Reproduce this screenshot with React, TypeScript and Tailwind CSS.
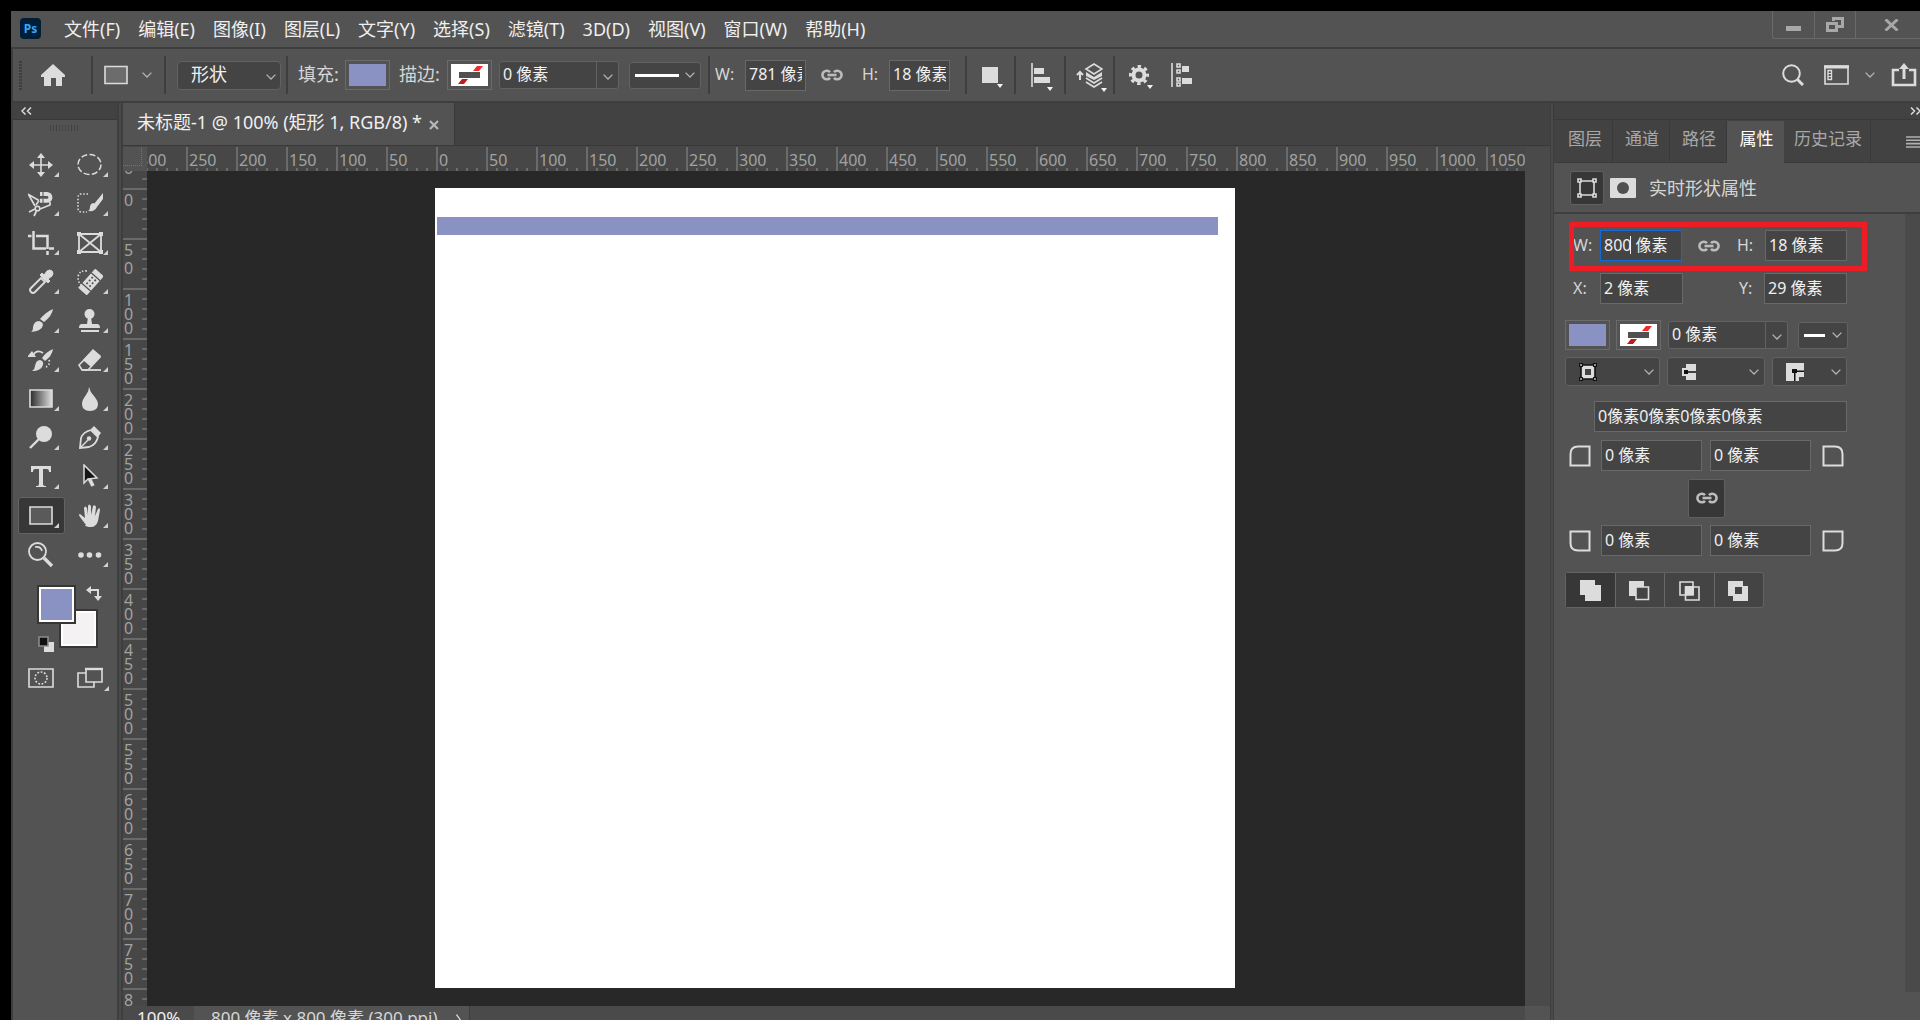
import type { ReactNode } from 'react'

const LIGHT = '#dcdcdc'

const menus = [
  '文件(F)',
  '编辑(E)',
  '图像(I)',
  '图层(L)',
  '文字(Y)',
  '选择(S)',
  '滤镜(T)',
  '3D(D)',
  '视图(V)',
  '窗口(W)',
  '帮助(H)',
]

const horizontalMarks = Array.from({ length: 28 }, (_, i) => Math.abs(i * 50 - 300))
const verticalMarks = Array.from({ length: 18 }, (_, i) => Math.abs(i * 50 - 50))

interface IconProps {
  w?: number
  h?: number
  children: ReactNode
}

function Icon({ w = 26, h = 26, children }: IconProps) {
  return (
    <svg
      width={w}
      height={h}
      viewBox={`0 0 ${w} ${h}`}
      fill="none"
      stroke={LIGHT}
      strokeWidth={1.6}
      className="block shrink-0"
      aria-hidden="true"
    >
      {children}
    </svg>
  )
}

function Chevron() {
  return (
    <svg width="10" height="6" viewBox="0 0 10 6" className="block shrink-0" aria-hidden="true">
      <path d="M.6.6 5 5 9.4.6" fill="none" stroke="#b4b4b4" strokeWidth="1.3" />
    </svg>
  )
}

function LinkIcon() {
  return (
    <Icon w={22} h={12}>
      <g stroke="#bcbcbc" strokeWidth={2.6}>
        <path d="M9 3.2A4.3 4.3 0 1 0 9 8.800" />
        <path d="M13 3.2a4.3 4.3 0 1 1 0 5.600" />
        <path d="M6.5 6h9" />
      </g>
    </Icon>
  )
}

function Divider() {
  return <span className="h-[38px] w-[2px] shrink-0 bg-[#3e3e3e]" />
}

function FillSwatch() {
  return (
    <button type="button" aria-label="填充" className="h-[30px] w-[45px] shrink-0 border border-[#6a6a6a] p-[3px]">
      <span className="block h-full w-full bg-[#8a92c4]" />
    </button>
  )
}

function StrokeSwatch() {
  return (
    <button type="button" aria-label="描边" className="h-[30px] w-[45px] shrink-0 border border-[#6a6a6a] p-[3px]">
      <svg width="37" height="22" viewBox="0 0 37 22" className="block" aria-hidden="true">
        <path d="M0 0h37v22H0z" fill="#fff" />
        <path d="M7 20 11 15h6l-4 5z" fill="#c01c1c" />
        <path d="M22 7 26 2h6l-4 5z" fill="#ee2a2a" />
        <path d="M8 8h21v6H8z" fill="#505050" />
      </svg>
    </button>
  )
}

interface FieldProps {
  label: string
  value: string
  className: string
  active?: boolean
}

function Field({ label, value, className, active }: FieldProps) {
  return (
    <input
      type="text"
      aria-label={label}
      defaultValue={value}
      className={`h-[31px] shrink-0 border bg-[#444] px-[3px] pb-1 text-base text-[#f0f0f0] outline-none ${
        active ? 'border-[#1469d8]' : 'border-[#686868]'
      } ${className}`}
    />
  )
}

function StrokeWidthCombo() {
  return (
    <div className="flex h-[28px] w-[120px] shrink-0 rounded-[3px] border border-[#626262] bg-[#444]">
      <input
        type="text"
        aria-label="描边宽度"
        defaultValue="0 像素"
        className="w-[96px] bg-transparent px-[3px] pb-[2px] text-base text-[#f0f0f0] outline-none"
      />
      <button
        type="button"
        aria-label="描边宽度选项"
        className="flex flex-1 items-center justify-center border-l border-[#626262] pt-1"
      >
        <Chevron />
      </button>
    </div>
  )
}

function MenuButton({ label, className, children }: { label: string; className: string; children: ReactNode }) {
  return (
    <button
      type="button"
      aria-label={label}
      aria-haspopup="listbox"
      className={`flex shrink-0 items-center justify-between rounded-[3px] border border-[#626262] bg-[#444] pr-[5px] ${className}`}
    >
      {children}
      <Chevron />
    </button>
  )
}

function DropMark() {
  return (
    <svg width="6" height="4" viewBox="0 0 6 4" className="absolute -right-1 -bottom-1" aria-hidden="true">
      <path d="M0 0h6L3 4z" fill="#f4f4f4" />
    </svg>
  )
}

const tools: { name: string; icon: ReactNode; plain?: boolean }[] = [
  {
    name: '移动工具',
    icon: (
      <>
        <path d="M13 4v18M4 13h18" />
        <path d="m13 1 4 5H9zM13 25l4-5H9zM1 13l5-4v8zM25 13l-5-4v8z" fill={LIGHT} stroke="none" />
      </>
    ),
  },
  { name: '椭圆选框工具', icon: <ellipse cx="12.5" cy="12.5" rx="11.5" ry="10" strokeDasharray="6 2.4" strokeWidth="1.5" /> },
  {
    name: '磁性套索工具',
    icon: (
      <>
        <path d="M7 15 .5 3.500 11 9.500M7 18l-6 3M8.500 20 6 25M12 18l10-4v-3M11 9.500 8 14" strokeWidth="1.7" />
        <circle cx="9.500" cy="17.500" r="2.300" />
        <path d="M12 3h7a3.200 3.200 0 0 1 0 6.800h-7" strokeWidth="4" />
        <path d="M15 0v5M15 8v5" stroke="#535353" strokeWidth="1" />
      </>
    ),
  },
  {
    name: '快速选择工具',
    icon: (
      <>
        <path d="M11 3H4Q1 3 1 7v10q0 4 4 4h5" strokeDasharray="1.5 1.8" />
        <path d="M26 2v6l-6 8-3-3z" fill={LIGHT} stroke="none" />
        <path d="M16 12q4 1 4 4-2 5-9 4 2-1 2-4 0-3 3-4z" fill={LIGHT} stroke="none" />
      </>
    ),
  },
  {
    name: '裁剪工具',
    icon: (
      <g strokeWidth="2.5">
        <path d="M5.500 1v17.500H18M0 6h3.500M8 6h11.500v13M19.500 21v4M21 18.500h5" />
      </g>
    ),
  },
  {
    name: '图框工具',
    icon: (
      <>
        <path d="M2 4h22v18H2zM2 4l22 18M24 4 2 22" strokeWidth="1.8" />
        <path d="M0 2h4v4H0zM22 2h4v4h-4zM0 20h4v4H0zM22 20h4v4h-4z" fill={LIGHT} stroke="none" />
      </>
    ),
  },
  {
    name: '吸管工具',
    icon: (
      <>
        <path d="m13 9 4 4L7 23q-2 2-4 0t0-4z" strokeWidth="1.9" />
        <path d="m12 6 2-2 2 2 3-4q3-2 5 0t0 5l-4 3 2 2-2 2z" fill={LIGHT} stroke={LIGHT} strokeWidth="1" />
      </>
    ),
  },
  {
    name: '污点修复画笔工具',
    icon: (
      <>
        <path d="M10 2Q2 1 1 8q0 5 3 8" strokeDasharray="1.5 1.8" />
        <g transform="rotate(-48 14 13)">
          <path d="M2 8h24v10H2z" fill={LIGHT} stroke={LIGHT} />
          <path d="M7 7v12M21 7v12" stroke="#535353" strokeWidth="1.2" />
          <path d="M9.500 11h10M9.500 15h10" stroke="#535353" strokeWidth="1.8" strokeDasharray="1.8 2" />
        </g>
      </>
    ),
  },
  {
    name: '画笔工具',
    icon: (
      <>
        <path d="M25 1q-1 7-9 13l-4-3Q18 4 25 1z" fill={LIGHT} stroke="none" />
        <path d="M11 13q4 1 4 4-1 6-12 7 2-1 2-5 1-6 6-6z" fill={LIGHT} stroke="none" />
      </>
    ),
  },
  {
    name: '仿制图章工具',
    icon: (
      <g fill={LIGHT} stroke="none">
        <circle cx="12.500" cy="6" r="5" />
        <path d="M11 9h3l1 7h5q3 0 3 4H2q0-4 3-4h5zM4 22h18v2H4z" />
      </g>
    ),
  },
  {
    name: '历史记录画笔工具',
    icon: (
      <>
        <path d="M25 2q-1 7-8 12l-3-3Q18 5 25 2zM12 13q4 1 3 5-2 6-11 6 3-2 3-5 1-6 5-6z" fill={LIGHT} stroke="none" />
        <path d="M15 6Q9 2 5 8" strokeWidth="1.7" />
        <path d="m4 4 4 6H-1z" fill={LIGHT} stroke="none" />
        <path d="M21 13q2 5-5 8" strokeDasharray="1.500 2" strokeWidth="1.8" />
      </>
    ),
  },
  {
    name: '橡皮擦工具',
    icon: (
      <>
        <path d="M16 4 23 10 11 23H5l-3-5z" />
        <path d="m16 3 7 6-9 10-7-6z" fill={LIGHT} stroke={LIGHT} />
        <path d="M5 23h19" strokeWidth="1.8" />
      </>
    ),
  },
  {
    name: '渐变工具',
    icon: (
      <>
        <defs>
          <linearGradient id="tool-gradient">
            <stop offset="0" stopColor="#2a2a2a" />
            <stop offset="1" stopColor="#dedede" />
          </linearGradient>
        </defs>
        <path d="M2 4h22v17H2z" fill="url(#tool-gradient)" />
      </>
    ),
  },
  { name: '模糊工具', icon: <path d="M12 1q1 5 5 9 4 5 4 8 0 7-8 7t-8-7q0-4 4-9 3-4 3-8z" fill={LIGHT} stroke="none" /> },
  {
    name: '减淡工具',
    icon: (
      <>
        <circle cx="16" cy="9" r="8" fill={LIGHT} stroke="none" />
        <path d="M11 14 2 23" strokeWidth="2.4" />
      </>
    ),
  },
  {
    name: '钢笔工具',
    icon: (
      <>
        <path d="M14 5q-8 2-10 8L3 23l9-1q7-2 9-10z" strokeWidth="1.800" />
        <path d="M3 23l8-8" strokeWidth="1.400" />
        <circle cx="12" cy="13.500" r="2.200" fill={LIGHT} stroke="none" />
        <path d="m14 4 3-3 7 7-3 4z" fill={LIGHT} stroke="none" />
      </>
    ),
  },
  {
    name: '横排文字工具',
    icon: (
      <path
        d="M3 2h20v6h-2q0-3-2-3h-4v15q0 2 3 2v1H8v-1q3 0 3-2V5H7Q5 5 5 8H3z"
        fill={LIGHT}
        stroke="none"
      />
    ),
  },
  {
    name: '路径选择工具',
    icon: (
      <>
        <path d="m12 14 4 8" strokeWidth="3.600" />
        <path d="M7 1v18l4-4 9-1z" fill="#151515" strokeWidth="1.500" />
      </>
    ),
  },
  { name: '矩形工具', icon: <path d="M2 4h22v17H2z" fill="#5a5a5a" /> },
  {
    name: '抓手工具',
    icon: (
      <path
        d="M9 22 3 14q-2-3 0-3l5 4L7 5q1-3 3 0l1 7V3q1-3 3 0v9l2-9q2-2 3 1l-1 9 3-7q2-2 2 1l-2 11q-2 6-7 6t-6-2z"
        fill={LIGHT}
        stroke="none"
      />
    ),
  },
  {
    name: '缩放工具',
    plain: true,
    icon: (
      <>
        <circle cx="9.500" cy="9.500" r="8.500" strokeWidth="1.800" />
        <path d="m16 16 8 8" strokeWidth="3.400" />
        <path d="M7 5q6-1 7 4" strokeWidth="1.600" />
      </>
    ),
  },
  {
    name: '编辑工具栏',
    icon: (
      <g fill={LIGHT} stroke="none">
        <circle cx="4" cy="13" r="2.800" />
        <circle cx="12.500" cy="13" r="2.800" />
        <circle cx="21.500" cy="13" r="2.800" />
      </g>
    ),
  },
]

function CornerMark() {
  return (
    <svg width="5" height="5" viewBox="0 0 5 5" className="absolute right-[5px] bottom-[5px]" aria-hidden="true">
      <path d="M5 0v5H0z" fill="#d0d0d0" />
    </svg>
  )
}

function MenuBar() {
  return (
    <header className="flex h-[36px] shrink-0 items-start bg-[#535353]">
      <div className="mt-[7px] ml-[9px] flex h-[21px] w-[21px] items-center justify-center rounded-[4px] bg-[#001e36] text-[12px] leading-none font-bold text-[#31a8ff]">
        Ps
      </div>
      <nav className="ml-[23px] flex h-[35px] items-center gap-[18px] text-[18px] leading-6 text-[#efefef]">
        {menus.map((menu) => (
          <button key={menu} type="button" className="whitespace-nowrap">
            {menu}
          </button>
        ))}
      </nav>
      <div className="ml-auto flex h-[28px] rounded-bl-[3px] border-b border-l border-[#6a6a6a]">
        <button type="button" aria-label="最小化" className="flex w-[42px] items-center justify-center border-r border-[#6a6a6a]">
          <span className="mt-2 h-[5px] w-[15px] bg-[#a8a8a8]" />
        </button>
        <button type="button" aria-label="还原" className="flex w-[41px] items-center justify-center border-r border-[#6a6a6a]">
          <Icon w={18} h={16}>
            <g stroke="#a8a8a8" strokeWidth={3}>
              <path d="M1.500 6.500h9v7h-9z" />
              <path d="M7.500 4V1.500h9v8H12" />
            </g>
          </Icon>
        </button>
        <button type="button" aria-label="关闭" className="flex w-[64px] items-center pl-[28px]">
          <Icon w={16} h={12}>
            <path d="m1.500.5 12 11m0-11-12 11" stroke="#a8a8a8" strokeWidth={3} />
          </Icon>
        </button>
      </div>
    </header>
  )
}

function OptionsBar() {
  return (
    <div className="flex h-[56px] shrink-0 items-center border-y-2 border-l-2 border-[#3e3e3e] bg-[#535353] text-[18px] text-[#d6d6d6]">
      <span className="ml-[6px] h-[29px] w-[3px] shrink-0 bg-[repeating-linear-gradient(#3e3e3e_0_2px,transparent_2px_3px)]" />
      <button type="button" aria-label="主页" className="ml-[19px]">
        <Icon w={24} h={22}>
          <path d="M12 0 24 11v2h-3v9h-6v-8h-5v8H3v-9H0v-2z" fill={LIGHT} stroke="none" />
        </Icon>
      </button>
      <div className="ml-[26px] flex">
        <Divider />
      </div>
      <button type="button" aria-label="矩形工具" className="ml-[11px] flex items-center gap-[14px]">
        <Icon w={24} h={20}>
          <path d="M1 1.500h22v17H1z" fill="#6c6c6c" />
        </Icon>
        <Chevron />
      </button>
      <div className="ml-[12px] flex">
        <Divider />
      </div>
      <div className="relative ml-[11px] shrink-0">
        <select
          aria-label="工具模式"
          className="block h-[29px] w-[104px] appearance-none rounded-[4px] border border-[#626262] bg-[#444] pb-[2px] pl-[13px] text-[18px] leading-none text-[#f0f0f0]"
        >
          <option>形状</option>
          <option>路径</option>
          <option>像素</option>
        </select>
        <span className="pointer-events-none absolute top-[13px] right-[5px]">
          <Chevron />
        </span>
      </div>
      <div className="ml-[5px] flex">
        <Divider />
      </div>
      <span className="ml-[10px] w-[47px] shrink-0 pb-[2px]">填充:</span>
      <FillSwatch />
      <span className="ml-[9px] w-[48px] shrink-0 pb-[2px]">描边:</span>
      <StrokeSwatch />
      <div className="ml-[7px]">
        <StrokeWidthCombo />
      </div>
      <div className="ml-[10px]">
        <MenuButton label="描边类型" className="h-[27px] w-[72px] pl-[5px]">
          <span className="h-[3px] w-[44px] bg-white" />
        </MenuButton>
      </div>
      <div className="ml-[7px] flex">
        <Divider />
      </div>
      <span className="ml-[5px] w-[30px] shrink-0 pb-[2px] text-base">W:</span>
      <Field label="宽度" value="781 像素" className="w-[61px]" />
      <button type="button" aria-label="链接形状的宽度和高度" className="ml-[15px]">
        <LinkIcon />
      </button>
      <span className="ml-[19px] w-[27px] shrink-0 pb-[2px] text-base">H:</span>
      <Field label="高度" value="18 像素" className="w-[61px]" />
      <div className="ml-[15px] flex items-center gap-[15px]">
        <Divider />
        <button type="button" aria-label="路径操作" className="relative w-[17px]">
          <Icon w={17} h={17}>
            <path d="M0 0h16v16H0z" fill={LIGHT} stroke="none" />
          </Icon>
          <DropMark />
        </button>
        <Divider />
        <button type="button" aria-label="路径对齐方式" className="relative w-[18px]">
          <Icon w={19} h={24}>
            <path d="M1 0v24" />
            <path d="M3 5h10v6H3zM3 14h16v6H3z" fill={LIGHT} stroke="none" />
          </Icon>
          <DropMark />
        </button>
        <Divider />
      </div>
      <button type="button" aria-label="路径排列方式" className="relative ml-[10px] w-[27px]">
        <Icon w={27} h={26}>
          <path d="M4 10v8M1 13l3-3 3 3" strokeWidth={2} />
          <path d="m18 2 8 5-8 5-8-5z" />
          <path d="m10 10 8 5 8-5v4l-8 4-8-4z" fill={LIGHT} stroke="none" />
          <path d="m10 16 8 5 8-5M10 20l8 5 8-5" />
        </Icon>
        <DropMark />
      </button>
      <div className="ml-[10px] flex">
        <Divider />
      </div>
      <button type="button" aria-label="其他形状和路径选项" className="relative ml-[14px] w-[20px]">
        <Icon w={20} h={20}>
          <circle cx="10" cy="10" r="5.500" strokeWidth={4} />
          <circle cx="10" cy="10" r="8.400" strokeWidth={3.400} strokeDasharray="3.300 3.300" strokeDashoffset="1.600" />
        </Icon>
        <DropMark />
      </button>
      <button type="button" aria-label="对齐边缘" className="ml-[22px]">
        <Icon w={22} h={26}>
          <path d="M1 1v24" />
          <path d="M6 2h3v3H6zM6 8h3v3H6zM6 16h3v3H6zM6 21h3v3H6z" />
          <path d="M11 4h7v6h-7zM11 16h10v6H11z" fill={LIGHT} stroke="none" />
        </Icon>
      </button>

      <div className="ml-auto flex items-center pr-[3px]">
        <button type="button" aria-label="搜索">
          <Icon w={22} h={22}>
            <circle cx="9.500" cy="9.500" r="8.300" strokeWidth={2} />
            <path d="m15 15 6 6" strokeWidth={3} />
          </Icon>
        </button>
        <button type="button" aria-label="选择工作区" className="ml-[20px] flex items-center gap-[16px]">
          <Icon w={25} h={20}>
            <path d="M1 1h23v18H1z" />
            <path d="M0 2h25" strokeWidth={3} />
            <path d="M4 5.500h3.500v9H4z" strokeWidth={1.400} />
            <path d="M4 8.500h3.500M4 11.500h3.500" strokeWidth={1.200} />
          </Icon>
          <Chevron />
        </button>
        <button type="button" aria-label="共享" className="ml-[16px]">
          <Icon w={26} h={24}>
            <path d="M8 7H2v15h22V7h-6" strokeWidth={2.600} />
            <path d="M13 16V5" strokeWidth={3} />
            <path d="m13 0 5 6H8z" fill={LIGHT} stroke="none" />
          </Icon>
        </button>
      </div>
    </div>
  )
}

function Toolbox() {
  return (
    <aside className="flex w-[108px] shrink-0 flex-col border-x-2 border-[#3e3e3e] bg-[#535353]">
      <div className="flex h-[17px] shrink-0 items-center border-b border-[#393939] bg-[#424242] pl-2">
        <button type="button" aria-label="折叠工具栏">
          <Icon w={11} h={8}>
            <path d="M4.500.5 1 4l3.500 3.500M10 .5 6.500 4 10 7.500" strokeWidth={1.500} />
          </Icon>
        </button>
      </div>
      <span className="mt-[5px] ml-[37px] h-[6px] w-[28px] shrink-0 bg-[repeating-linear-gradient(90deg,#424242_0_1px,transparent_1px_3px)]" />
      <div className="mt-[15px] ml-[5px] grid grid-cols-[47px_47px] gap-[2px]">
        {tools.map((tool) => (
          <button
            key={tool.name}
            type="button"
            aria-label={tool.name}
            className={`relative flex h-[37px] items-center justify-center rounded-[3px] border pr-[2px] ${
              tool.name === '矩形工具' ? 'border-[#636363] bg-[#373737]' : 'border-transparent'
            }`}
          >
            <Icon>{tool.icon}</Icon>
            {!tool.plain && <CornerMark />}
          </button>
        ))}
      </div>
      <div className="relative mt-[12px] ml-[24px] h-[68px] w-[66px] shrink-0">
        <button
          type="button"
          aria-label="背景色"
          className="absolute top-[24px] left-[22px] h-[39px] w-[39px] border-2 border-[#373737] bg-white p-[2px]"
        >
          <span className="block h-full bg-[#f5f2f4]" />
        </button>
        <button
          type="button"
          aria-label="前景色"
          className="absolute top-0 left-0 h-[39px] w-[39px] border-2 border-[#373737] bg-white p-[2px]"
        >
          <span className="block h-full bg-[#8a92c4]" />
        </button>
        <button type="button" aria-label="切换前景色和背景色" className="absolute top-0 left-[49px]">
          <Icon w={17} h={17}>
            <path d="M4 5h8v8" strokeWidth={2} />
            <path d="m0 5 5-4v8zM12 16l4-5H8z" fill={LIGHT} stroke="none" />
          </Icon>
        </button>
        <button type="button" aria-label="默认前景色和背景色" className="absolute top-[51px] left-px">
          <Icon w={17} h={17}>
            <path d="M6 6h10v10H6z" fill={LIGHT} stroke="none" />
            <path d="M1 1h9v9H1z" fill="#101010" stroke="#8c8c8c" />
          </Icon>
        </button>
      </div>
      <div className="mt-[6px] ml-[5px] grid grid-cols-[47px_47px] gap-[2px]">
        <button type="button" aria-label="以快速蒙版模式编辑" className="flex h-[37px] items-center justify-center pr-[2px]">
          <Icon>
            <path d="M1 4h24v18H1z" />
            <circle cx="13" cy="13" r="6" strokeDasharray="1.800 1.600" />
          </Icon>
        </button>
        <button type="button" aria-label="更改屏幕模式" className="relative flex h-[37px] items-center justify-center pr-[2px]">
          <Icon>
            <path d="M1 8h16v14H1z" />
            <path d="M9 4h16v13H9z" fill="#535353" />
            <path d="M8 4h18" strokeWidth={2.400} />
          </Icon>
          <CornerMark />
        </button>
      </div>
    </aside>
  )
}

function HorizontalRuler() {
  return (
    <div className="h-[24px] min-w-0 flex-1 overflow-hidden bg-[#474747]">
      <div className="-ml-[11px] flex">
        {horizontalMarks.map((mark, index) => (
          <div key={index} className="grid h-[24px] w-[50px] shrink-0 border-l-2 border-[#6a6a6a]">
            <span className="[grid-area:1/1] mr-[2px] ml-[8px] h-[5px] self-end bg-[repeating-linear-gradient(90deg,#6a6a6a_0_2px,transparent_2px_10px)]" />
            <span className="[grid-area:1/1] pl-px text-base leading-[26px] text-[#a2a2a2]">{mark}</span>
          </div>
        ))}
      </div>
    </div>
  )
}

function VerticalRuler() {
  return (
    <div className="w-[24px] shrink-0 overflow-hidden bg-[#474747]">
      <div className="-mt-[33px] flex flex-col">
        {verticalMarks.map((mark, index) => (
          <div key={index} className="flex h-[50px] shrink-0 justify-between border-t-2 border-[#6a6a6a] text-base text-[#a2a2a2]">
            {/* one digit per line */}
            <span
              className={`w-[11px] pl-px break-all ${mark >= 100 ? 'pt-[3px] leading-[14px]' : 'pt-px leading-[18px]'}`}
            >
              {mark}
            </span>
            <span className="mt-[8px] h-[38px] w-[5px] bg-[repeating-linear-gradient(#6a6a6a_0_2px,transparent_2px_10px)]" />
          </div>
        ))}
      </div>
    </div>
  )
}

function DocumentArea() {
  return (
    <main className="flex min-w-0 flex-1 flex-col border-r border-l-2 border-[#3e3e3e] bg-[#474747]">
      <div className="flex h-[43px] shrink-0 border-b border-[#393939] bg-[#424242]">
        <div className="flex h-[42px] w-[332px] items-center border-r border-[#393939] bg-[#535353] pr-[15px] pb-[3px] pl-[14px]">
          <span className="text-[18px] whitespace-nowrap text-[#f0f0f0]">未标题-1 @ 100% (矩形 1, RGB/8) *</span>
          <button type="button" aria-label="关闭文档" className="mt-1 ml-auto">
            <Icon w={10} h={10}>
              <path d="m1 1 8 8m0-8L1 9" stroke="#b8b8b8" strokeWidth={2.200} />
            </Icon>
          </button>
        </div>
      </div>
      <div className="flex min-h-0 flex-1 pt-px">
        <div className="flex min-w-0 flex-1 flex-col">
          <div className="flex shrink-0">
            <div className="flex h-[24px] w-[24px] shrink-0 bg-[#535353] pr-[5px]">
              <span className="h-[19px] w-full border-r border-b border-dotted border-[#747474]" />
            </div>
            <HorizontalRuler />
          </div>
          <div className="flex min-h-0 flex-1">
            <VerticalRuler />
            <div className="min-w-0 flex-1 overflow-hidden bg-[#282828] pt-[17px] pl-[288px]">
              <div className="relative h-[800px] w-[800px] bg-white">
                <div className="absolute top-[29px] left-[2px] h-[18px] w-[781px] bg-[#8a92c4]" />
              </div>
            </div>
          </div>
        </div>
        <div className="w-[25px] shrink-0 bg-[#4a4a4a]" />
      </div>
      <footer className="flex h-[14px] shrink-0 overflow-hidden bg-[#4a4a4a] text-[17px] leading-6 text-[#f0f0f0]">
        <span className="w-[71px] pl-[14px]">100%</span>
        <span className="w-[255px] bg-[#535353] pl-[17px] whitespace-nowrap text-[#d6d6d6]">800 像素 x 800 像素 (300 ppi)</span>
        <button type="button" aria-label="文档信息" className="h-6 w-[21px] border-r border-[#3e3e3e] bg-[#535353] pt-[5px] pl-[7px]">
          <Icon w={6} h={14}>
            <path d="m.5.5 4.500 6.500-4.500 6.500" strokeWidth={1.300} />
          </Icon>
        </button>
        <span className="ml-auto w-[25px] bg-[#535353]" />
      </footer>
    </main>
  )
}

const panelTabs = [
  { name: '图层', width: 'w-[57px]' },
  { name: '通道', width: 'w-[57px]' },
  { name: '路径', width: 'w-[57px]' },
  { name: '属性', width: 'w-[57px]' },
  { name: '历史记录', width: 'w-[87px]' },
]

function CornerIcon({ d }: { d: string }) {
  return (
    <Icon w={22} h={22}>
      <path d={d} strokeWidth={2} />
    </Icon>
  )
}

const pathOperations = [
  { name: '合并形状', icon: <path d="M1 1h15v5h6v16H6v-6H1z" fill={LIGHT} stroke="none" /> },
  {
    name: '减去顶层形状',
    icon: (
      <>
        <path d="M1 2h15v15H1z" fill={LIGHT} stroke="none" />
        <path d="M8 8h12.500v12.500H8z" fill="#444" />
      </>
    ),
  },
  {
    name: '与形状区域相交',
    icon: (
      <>
        <path d="M2 3h13v13H2zM7.500 8H21v13H7.500z" />
        <path d="M7 7h9v9H7z" fill={LIGHT} stroke="none" />
      </>
    ),
  },
  {
    name: '排除重叠形状',
    icon: <path fillRule="evenodd" d="M1 2h15v5h5v15H6v-5H1zM8 8v7h7V8z" fill={LIGHT} stroke="none" />,
  },
]

function PropertiesPanel() {
  return (
    <aside className="flex w-[369px] shrink-0 flex-col border-l-2 border-[#4a4a4a] bg-[#535353]">
      <div className="flex h-[17px] shrink-0 items-center justify-end border-b border-l border-[#393939] bg-[#424242]">
        <button type="button" aria-label="折叠面板">
          <Icon w={10} h={8}>
            <path d="M1 .5 4.500 4 1 7.500M6.500.5 10 4 6.500 7.500" strokeWidth={1.500} />
          </Icon>
        </button>
      </div>
      <div className="flex h-[43px] shrink-0 border-l border-[#3e3e3e] bg-[#424242] pl-[2px]">
        {panelTabs.map((tab) => (
          <button
            key={tab.name}
            type="button"
            className={`mt-px shrink-0 pb-[6px] pl-[2px] text-[17px] whitespace-nowrap ${tab.width} ${
              tab.name === '属性'
                ? 'bg-[#535353] text-white'
                : 'border-r border-b border-[#393939] text-[#a8a8a8]'
            }`}
          >
            {tab.name}
          </button>
        ))}
        <div className="mt-px flex flex-1 items-center justify-end border-b border-[#393939]">
          <button type="button" aria-label="面板菜单">
            <Icon w={14} h={12}>
              <path d="M0 1h14M0 4.300h14M0 7.600h14M0 11h14" stroke="#b0b0b0" />
            </Icon>
          </button>
        </div>
      </div>
      <div className="flex h-[51px] shrink-0 items-center border-b-2 border-l border-[#3e3e3e] pl-[16px]">
        <button
          type="button"
          aria-label="形状属性"
          className="flex h-[34px] w-[34px] items-center justify-center rounded-[3px] border border-[#606060] bg-[#373737]"
        >
          <Icon w={20} h={20}>
            <path d="M3 3h14v14H3z" />
            <path d="M1 1h3v3H1zM16 1h3v3h-3zM1 16h3v3H1zM16 16h3v3h-3z" fill="#373737" />
          </Icon>
        </button>
        <button type="button" aria-label="蒙版" className="ml-[6px]">
          <Icon w={26} h={20}>
            <rect width="26" height="20" rx="1" fill={LIGHT} stroke="none" />
            <circle cx="13" cy="10" r="6" fill="#505050" stroke="none" />
          </Icon>
        </button>
        <h2 className="ml-[13px] pt-[2px] text-[18px] text-[#d6d6d6]">实时形状属性</h2>
      </div>
      <div className="flex min-h-0 flex-1 justify-between border-l border-[#3e3e3e]">
        <div className="relative w-[294px] pl-[11px] text-base text-[#d6d6d6]">
          <div className="mt-[16px] flex h-[31px] items-center pl-[8px]">
            <span className="w-[27px] pb-[2px]">W:</span>
            <Field label="形状宽度" value="800 像素" className="w-[82px]" active />
            <button type="button" aria-label="链接宽度和高度" className="ml-[16px]">
              <LinkIcon />
            </button>
            <span className="ml-[17px] w-[28px] pb-[2px]">H:</span>
            <Field label="形状高度" value="18 像素" className="w-[82px]" />
          </div>
          {/* text caret in the width field */}
          <span className="pointer-events-none absolute top-[22px] left-[76px] h-[18px] w-px bg-[#f0f0f0]" />
          <div className="mt-[12px] flex h-[31px] items-center pl-[8px]">
            <span className="w-[27px] pb-[2px]">X:</span>
            <Field label="水平位置" value="2 像素" className="w-[83px]" />
            <span className="ml-[56px] w-[25px] pb-[2px]">Y:</span>
            <Field label="垂直位置" value="29 像素" className="w-[83px]" />
          </div>
          <div className="mt-[16px] flex h-[30px] items-center">
            <FillSwatch />
            <div className="ml-[6px] flex">
              <StrokeSwatch />
            </div>
            <div className="ml-[7px]">
              <StrokeWidthCombo />
            </div>
            <div className="ml-[10px]">
              <MenuButton label="形状描边类型" className="h-[27px] w-[50px] pl-[5px]">
                <span className="h-[3px] w-[21px] bg-white" />
              </MenuButton>
            </div>
          </div>
          <div className="mt-[7px] flex h-[29px] gap-[7px]">
            <MenuButton label="描边对齐类型" className="w-[95px] pl-[12px]">
              <Icon w={20} h={20}>
                <path d="M3 3h14v14H3z" fill={LIGHT} stroke="#111" />
                <path d="M7 7h6v6H7z" fill="#444" stroke="none" />
                <path d="M1 1h4v4H1zM15 1h4v4h-4zM1 15h4v4H1zM15 15h4v4h-4z" fill="#111" stroke="none" />
                <path d="M2.500 2.500h1v1h-1zM16.500 2.500h1v1h-1zM2.500 16.500h1v1h-1zM16.500 16.500h1v1h-1z" strokeWidth={0.800} />
              </Icon>
            </MenuButton>
            <MenuButton label="描边线段端点" className="w-[98px] pl-[14px]">
              <Icon w={14} h={18}>
                <path d="M4 1h10v16H4v-4H0V5h4z" fill={LIGHT} stroke="none" />
                <path d="M2 7h4v4H2zM6 8.300h8v1.500H6z" fill="#111" stroke="none" />
              </Icon>
            </MenuButton>
            <MenuButton label="描边线段合并类型" className="w-[75px] pl-[13px]">
              <Icon w={18} h={18}>
                <path d="M0 0h18v14h-5v4H0z" fill={LIGHT} stroke="none" />
                <path d="M6 6h5v4H6zM10 7.500h8v1.500h-8zM8 9h1.500v9H8z" fill="#111" stroke="none" />
              </Icon>
            </MenuButton>
          </div>
          <div className="mt-[15px] flex pl-[29px]">
            <Field label="圆角半径" value="0像素0像素0像素0像素" className="w-[253px]" />
          </div>
          <div className="mt-2 flex h-[31px] items-center pl-[4px]">
            <CornerIcon d="M9 1.500h11.500v19h-19V9q0-7.500 7.500-7.500z" />
            <div className="ml-[10px] flex gap-2">
              <Field label="左上角半径" value="0 像素" className="w-[101px]" />
              <Field label="右上角半径" value="0 像素" className="w-[101px]" />
            </div>
            <span className="ml-[11px]">
              <CornerIcon d="M13 1.500H1.500v19h19V9q0-7.500-7.500-7.500z" />
            </span>
          </div>
          <button
            type="button"
            aria-label="将角半径值链接到一起"
            className="mt-2 ml-[123px] flex h-[39px] w-[37px] items-center justify-center rounded-[2px] border border-[#606060] bg-[#373737] pb-[2px]"
          >
            <LinkIcon />
          </button>
          <div className="mt-[7px] flex h-[31px] items-center pl-[4px]">
            <CornerIcon d="M1.500 1.500h19v19H9q-7.500 0-7.500-7.500z" />
            <div className="ml-[10px] flex gap-2">
              <Field label="左下角半径" value="0 像素" className="w-[101px]" />
              <Field label="右下角半径" value="0 像素" className="w-[101px]" />
            </div>
            <span className="ml-[11px]">
              <CornerIcon d="M1.500 1.500h19V13q0 7.500-7.500 7.500H1.500z" />
            </span>
          </div>
          <div className="mt-4 flex h-[36px] w-[199px] divide-x divide-[#686868] rounded-[3px] border border-[#636363] bg-[#444]">
            {pathOperations.map((operation) => (
              <button
                key={operation.name}
                type="button"
                aria-label={operation.name}
                className="flex flex-1 items-center justify-center first:bg-[#373737]"
              >
                <Icon w={23} h={23}>{operation.icon}</Icon>
              </button>
            ))}
          </div>
          {/* highlight around the size row */}
          <div className="pointer-events-none absolute top-[8px] left-[15px] h-[49px] w-[298px] border-5 border-[#ee1c24]" />
        </div>
        <div className="mb-[28px] w-[15px] shrink-0 bg-[#4a4a4a]" />
      </div>
    </aside>
  )
}

export default function App() {
  return (
    <div className="h-screen overflow-hidden bg-black pt-[11px] pl-[11px] font-['Noto_Sans','Noto_Sans_CJK_SC',sans-serif]">
      <div className="flex h-full flex-col">
        <MenuBar />
        <OptionsBar />
        <div className="flex min-h-0 flex-1">
          <Toolbox />
          <div className="w-[2px] shrink-0 bg-[#4a4a4a]" />
          <DocumentArea />
          <PropertiesPanel />
        </div>
      </div>
    </div>
  )
}
